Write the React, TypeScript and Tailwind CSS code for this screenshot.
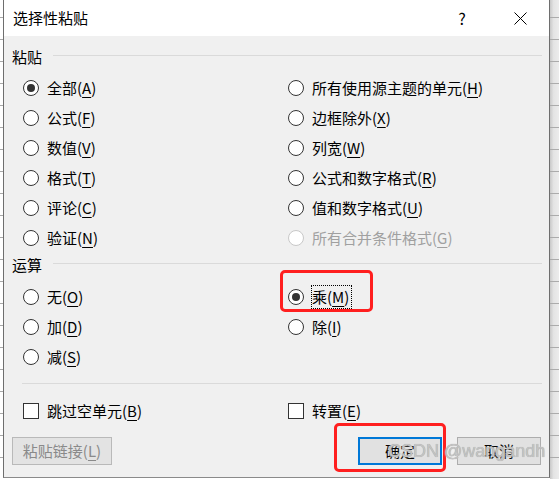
type Opt = { text: string; k: string; checked?: boolean; disabled?: boolean; focus?: boolean };

const pasteLeft: Opt[] = [
  { text: "全部", k: "A", checked: true },
  { text: "公式", k: "F" },
  { text: "数值", k: "V" },
  { text: "格式", k: "T" },
  { text: "评论", k: "C" },
  { text: "验证", k: "N" },
];

const pasteRight: Opt[] = [
  { text: "所有使用源主题的单元", k: "H" },
  { text: "边框除外", k: "X" },
  { text: "列宽", k: "W" },
  { text: "公式和数字格式", k: "R" },
  { text: "值和数字格式", k: "U" },
  { text: "所有合并条件格式", k: "G", disabled: true },
];

const opLeft: Opt[] = [
  { text: "无", k: "O" },
  { text: "加", k: "D" },
  { text: "减", k: "S" },
];

const opRight: Opt[] = [
  { text: "乘", k: "M", checked: true, focus: true },
  { text: "除", k: "I" },
];

function Label({ text, k }: { text: string; k: string }) {
  return (
    <>
      {text}(<span className="underline underline-offset-[3px]">{k}</span>)
    </>
  );
}

function RadioRow({ opt }: { opt: Opt }) {
  return (
    <div className="flex h-[30px] items-center">
      <span
        className={
          "flex h-4 w-4 items-center justify-center rounded-full border bg-white " +
          (opt.disabled ? "border-[#c8c8c8]" : "border-[#333333]")
        }
      >
        {opt.checked && <span className="h-2 w-2 rounded-full bg-[#333333]" />}
      </span>
      {opt.focus ? (
        <span className="ml-[7px] border border-dotted border-black pr-[2px] leading-[22px]">
          <Label text={opt.text} k={opt.k} />
        </span>
      ) : (
        <span className={"ml-2 leading-[20px] " + (opt.disabled ? "text-[#a0a0a0]" : "")}>
          <Label text={opt.text} k={opt.k} />
        </span>
      )}
    </div>
  );
}

function GroupHeader({ label, className }: { label: string; className: string }) {
  return (
    <div className={"flex h-5 pl-2 pr-[7px] " + className}>
      <span className="leading-[20px]">{label}</span>
      <span className="ml-[11px] mt-2 h-px flex-1 bg-[#dadada]" />
    </div>
  );
}

function CheckRow({ text, k }: { text: string; k: string }) {
  return (
    <div className="flex h-[30px] items-center">
      <span className="h-4 w-4 border border-[#333333] bg-white" />
      <span className="ml-2 leading-[20px]">
        <Label text={text} k={k} />
      </span>
    </div>
  );
}

export default function App() {
  return (
    <div className="relative flex h-[479px] w-[559px] overflow-hidden bg-white font-['Noto_Sans_CJK_SC',sans-serif] text-[15px] text-black">
      <div className="h-full w-[3px] bg-white bg-[linear-gradient(#a8a8a8_1px,transparent_1px)] bg-[length:100%_22px] bg-[position:0_17px]" />

      <div className="flex h-[478px] w-[547px] flex-col border-x border-b border-x-[#6e6e6e] border-b-[#8a8a8a]">
        <div className="flex h-9 items-center bg-white pl-[9px] pr-[14px]">
          <span className="leading-[20px]">选择性粘贴</span>
          <span className="ml-auto flex w-[30px] justify-center text-[16px]">?</span>
          <span className="ml-[28px] flex w-[30px] justify-center">
            <svg width="13" height="13" viewBox="0 0 13 13">
              <path d="M0.5 0.5L12.5 12.5M12.5 0.5L0.5 12.5" stroke="#000" strokeWidth="1" fill="none" />
            </svg>
          </span>
        </div>

        <div className="flex flex-1 flex-col bg-[#f0f0f0]">
          <GroupHeader label="粘贴" className="mt-[11px]" />
          <div className="mt-[6px] grid grid-cols-[265px_1fr] pl-[19px]">
            <div>
              {pasteLeft.map((o) => (
                <RadioRow key={o.k} opt={o} />
              ))}
            </div>
            <div>
              {pasteRight.map((o) => (
                <RadioRow key={o.k} opt={o} />
              ))}
            </div>
          </div>

          <GroupHeader label="运算" className="mt-[2px]" />
          <div className="mt-[7px] grid grid-cols-[265px_1fr] pl-[19px]">
            <div>
              {opLeft.map((o) => (
                <RadioRow key={o.k} opt={o} />
              ))}
            </div>
            <div>
              {opRight.map((o) => (
                <RadioRow key={o.k} opt={o} />
              ))}
            </div>
          </div>

          <div className="ml-[18px] mr-[7px] mt-[11px] h-px bg-[#dadada]" />

          <div className="mt-3 grid grid-cols-[265px_1fr] pl-[19px]">
            <CheckRow text="跳过空单元" k="B" />
            <CheckRow text="转置" k="E" />
          </div>

          <div className="mt-[11px] flex pl-2 pr-2">
            <button className="h-7 w-[100px] border border-[#b9b9b9] bg-[#e3e3e3] text-[#8a8a8a]">
              <Label text="粘贴链接" k="L" />
            </button>
            <button className="ml-auto h-7 w-[84px] border-2 border-[#0078d7] bg-[#e1e1e1]">确定</button>
            <button className="ml-[15px] h-7 w-[84px] border border-[#adadad] bg-[#e1e1e1]">取消</button>
          </div>
        </div>
      </div>

      <div className="h-full w-[9px] bg-[linear-gradient(to_right,#c8c8c8,#e4e4e4_40%,#ececec)]">
        <div className="h-full w-full bg-[linear-gradient(#ababab_1px,transparent_1px)] bg-[length:100%_22px] bg-[position:0_17px]" />
      </div>

      <div className="pointer-events-none absolute left-[280px] top-[270px] h-[42px] w-[93px] rounded-[5px] border-[3px] border-[#ff1f1f]" />
      <div className="pointer-events-none absolute left-[334px] top-[423px] h-[49px] w-[112px] rounded-[5px] border-[3px] border-[#ff1f1f]" />

      <div className="pointer-events-none absolute left-[388px] top-[440px] z-10 font-['Liberation_Sans',sans-serif] text-[18px] leading-[22px] text-[#c4c4c4] [text-shadow:0_0_1px_#8a8a8a,0_0_2px_#ffffff]">
        CSDN @wangandh
      </div>
    </div>
  );
}
